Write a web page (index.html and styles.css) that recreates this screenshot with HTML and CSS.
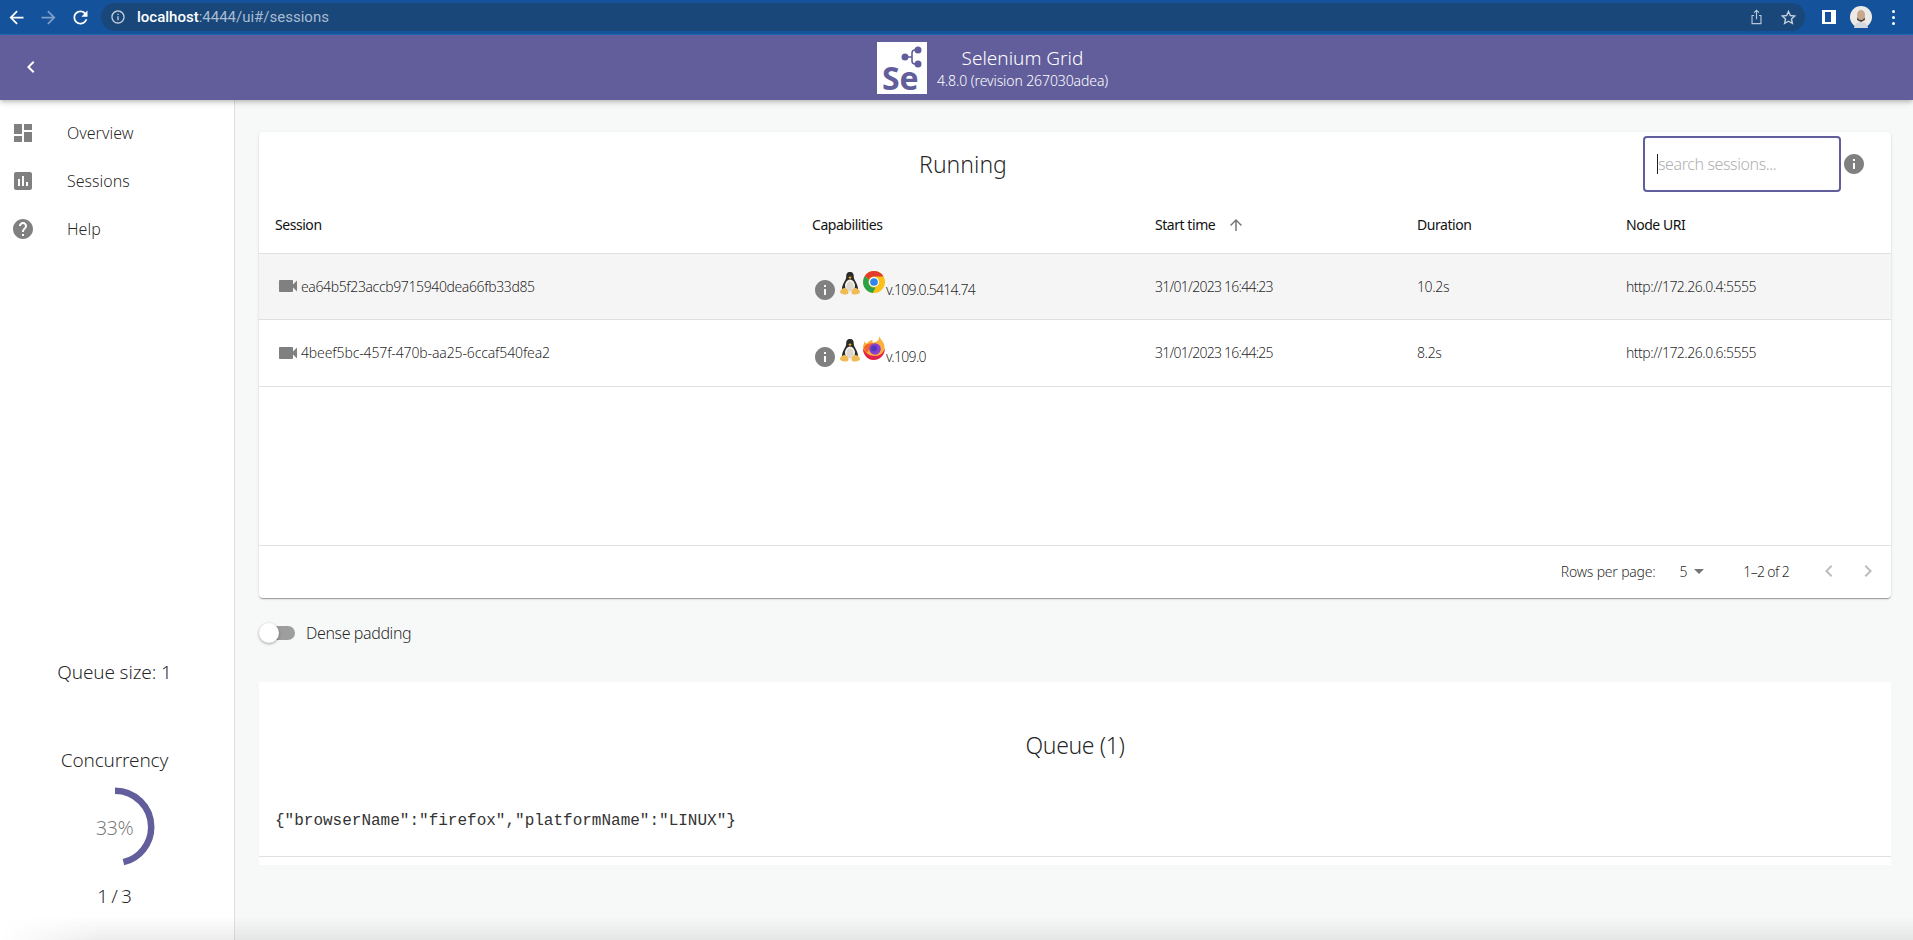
FILE: index.html
```html
<!DOCTYPE html>
<html lang="en">
<head>
    <meta charset="UTF-8">
    <meta name="viewport" content="width=device-width, initial-scale=1.0">
    <title>Selenium Grid</title>
    <link rel="stylesheet" href="styles.css">
</head>
<body>

    <!-- Browser toolbar -->
    <div class="browser-bar">
        <svg class="bar-icon" viewBox="0 0 24 24"><path d="M20 11H7.83l5.59-5.59L12 4l-8 8 8 8 1.41-1.41L7.83 13H20v-2z"/></svg>
        <svg class="bar-icon dim" viewBox="0 0 24 24"><path d="M12 4l-1.41 1.41L16.17 11H4v2h12.17l-5.58 5.59L12 20l8-8z"/></svg>
        <svg class="bar-icon" viewBox="0 0 24 24"><path d="M17.65 6.35C16.2 4.9 14.21 4 12 4c-4.42 0-7.99 3.58-7.99 8s3.57 8 7.99 8c3.73 0 6.84-2.55 7.73-6h-2.08c-.82 2.33-3.04 4-5.65 4-3.31 0-6-2.69-6-6s2.69-6 6-6c1.66 0 3.14.69 4.22 1.78L13 11h7V4l-2.35 2.35z"/></svg>
        <div class="omnibox">
            <svg class="omni-info" viewBox="0 0 24 24"><path d="M11 7h2v2h-2zm0 4h2v6h-2zm1-9C6.48 2 2 6.48 2 12s4.48 10 10 10 10-4.48 10-10S17.52 2 12 2zm0 18c-4.41 0-8-3.59-8-8s3.59-8 8-8 8 3.59 8 8-3.59 8-8 8z"/></svg>
            <span class="url"><b>localhost</b>:4444/ui#/sessions</span>
            <svg class="omni-share" viewBox="0 0 16 20"><path d="M8 1v11M5 4l3-3 3 3M5 7.500H2.500v10h11v-10H11" fill="none" stroke="#b9c6d6" stroke-width="1.400"/></svg>
            <svg class="omni-star" viewBox="0 0 24 24"><path d="M12 3.500l2.600 5.700 6.200.7-4.600 4.200 1.300 6.100L12 17.200l-5.500 3 1.300-6.100-4.600-4.200 6.200-.7z" fill="none" stroke="#c3cfdc" stroke-width="2"/></svg>
        </div>
        <div class="side-panel"></div>
        <svg class="avatar" viewBox="0 0 22 22">
            <circle cx="11" cy="11" r="11" fill="#eceae6"/>
            <ellipse cx="11" cy="9" rx="4" ry="5" fill="#c9a78d"/>
            <path d="M7.500 11c1 4 6 4 7 0l.5 3-4 2-4-2z" fill="#4a3d35"/>
            <path d="M4 22c1-5 4-6 7-6s6 1 7 6z" fill="#d5d9de"/>
        </svg>
        <div class="dots"><i></i><i></i><i></i></div>
    </div>

    <header class="app-bar">
        <svg class="back" viewBox="0 0 24 24"><path d="M15.410 7.410L14 6l-6 6 6 6 1.410-1.410L10.830 12z"/></svg>
        <div class="logo">
            <svg class="logo-nodes" viewBox="0 0 50 52">
                <path d="M28 15h7M41 8h-3c-2 0-3 1-3 3v8c0 2 1 3 3 3h3" fill="none" stroke="#615e9b" stroke-width="1.600"/>
                <circle cx="28" cy="15" r="3.500" fill="#615e9b"/>
                <circle cx="41" cy="8" r="3.500" fill="#615e9b"/>
                <circle cx="41" cy="22" r="3.500" fill="#615e9b"/>
            </svg>
            <span class="logo-text">Se</span>
        </div>
        <div class="app-title">
            <h1>Selenium Grid</h1>
            <p>4.8.0 (revision 267030adea)</p>
        </div>
    </header>

    <div class="layout">
        <aside class="sidebar">
            <nav class="nav">
                <a class="nav-item">
                    <svg viewBox="0 0 24 24"><path d="M3 13h8V3H3v10zm0 8h8v-6H3v6zm10 0h8V11h-8v10zm0-18v6h8V3h-8z"/></svg>
                    Overview
                </a>
                <a class="nav-item">
                    <svg viewBox="0 0 24 24"><path d="M19 3H5c-1.100 0-2 .9-2 2v14c0 1.100.9 2 2 2h14c1.100 0 2-.9 2-2V5c0-1.100-.9-2-2-2zM9 17H7v-7h2v7zm4 0h-2V7h2v10zm4 0h-2v-4h2v4z"/></svg>
                    Sessions
                </a>
                <a class="nav-item">
                    <svg viewBox="0 0 24 24"><path d="M12 2C6.480 2 2 6.480 2 12s4.480 10 10 10 10-4.480 10-10S17.520 2 12 2zm1 17h-2v-2h2v2zm2.070-7.750l-.9.920C13.450 12.900 13 13.500 13 15h-2v-.5c0-1.100.45-2.100 1.170-2.830l1.240-1.260c.37-.36.59-.86.59-1.410 0-1.100-.9-2-2-2s-2 .9-2 2H8c0-2.210 1.790-4 4-4s4 1.790 4 4c0 .88-.36 1.680-.93 2.250z"/></svg>
                    Help
                </a>
            </nav>
            <div class="stats">
                <div class="stat-line queue-size">Queue size: 1</div>
                <div class="stat-line">Concurrency</div>
                <div class="ring">
                    <svg viewBox="0 0 80 80"><circle cx="40" cy="40" r="36.200" fill="none" stroke="#615e9b" stroke-width="6.500" stroke-dasharray="105 300" transform="rotate(-90 40 40)"/></svg>
                    <span class="ring-label">33%</span>
                </div>
                <div class="stat-line ratio">1 / 3</div>
            </div>
        </aside>

        <main class="content">
            <section class="card running">
                <div class="toolbar">
                    <h2 class="running-title">Running</h2>
                    <div class="search-box"><span class="caret"></span><span class="placeholder">search sessions...</span></div>
                    <svg class="info-icon search-info" viewBox="0 0 24 24"><path d="M12 2C6.480 2 2 6.480 2 12s4.480 10 10 10 10-4.480 10-10S17.520 2 12 2zm1 15h-2v-6h2v6zm0-8h-2V7h2v2z"/></svg>
                </div>
                <table class="sessions">
                    <thead>
                        <tr>
                            <th class="col-session">Session</th>
                            <th class="col-caps">Capabilities</th>
                            <th class="col-start">Start time <svg class="sort" viewBox="0 0 24 24"><path d="M4 12l1.410 1.410L11 7.830V20h2V7.830l5.580 5.590L20 12l-8-8-8 8z"/></svg></th>
                            <th class="col-duration">Duration</th>
                            <th class="col-node">Node URI</th>
                        </tr>
                    </thead>
                    <tbody>
                        <tr class="selected">
                            <td><div class="session-id"><svg class="cam" viewBox="0 0 24 24"><path d="M17 10.500V7c0-.55-.45-1-1-1H4c-.55 0-1 .45-1 1v10c0 .55.45 1 1 1h12c.55 0 1-.45 1-1v-3.500l4 4v-11l-4 4z"/></svg>ea64b5f23accb9715940dea66fb33d85</div></td>
                            <td>
                                <div class="caps">
                                    <svg class="info-icon" viewBox="0 0 24 24"><path d="M12 2C6.480 2 2 6.480 2 12s4.480 10 10 10 10-4.480 10-10S17.520 2 12 2zm1 15h-2v-6h2v6zm0-8h-2V7h2v2z"/></svg>
                                    <svg class="tux" viewBox="0 0 20 24">
                                        <path d="M10 1C7 1 6.200 3 6.200 6c0 3-4.200 7-4.200 12h16c0-5-4.200-9-4.200-12 0-3-.8-5-3.800-5z" fill="#2b2b2b"/>
                                        <ellipse cx="10" cy="15" rx="5" ry="6.500" fill="#f4f1ea"/>
                                        <ellipse cx="10" cy="15.500" rx="3.500" ry="5" fill="#dcd8cf"/>
                                        <path d="M8.300 6.500L10 5.300l1.700 1.200L10 8z" fill="#e9a825"/>
                                        <path d="M0 21c0-2 3-4 5-4 2 0 3.500 3 3.500 5 0 1-2 1.500-4 1.500S0 22.500 0 21zM20 21c0-2-3-4-5-4-2 0-3.500 3-3.500 5 0 1 2 1.500 4 1.500s4.500-1 4.500-2.500z" fill="#f0bb55"/>
                                    </svg>
                                    <svg class="browser" viewBox="0 0 20 20">
                                        <circle cx="10" cy="10" r="10" fill="#fbc116"/>
                                        <path d="M10 0a10 10 0 0 1 8.660 5H10a5 5 0 0 0-4.600 3L1.600 4.600A10 10 0 0 1 10 0z" fill="#e33b2e"/>
                                        <path d="M1.600 4.600L5.400 8a5 5 0 0 0 6.100 6.800L8.800 19.900A10 10 0 0 1 1.600 4.600z" fill="#2aa24a"/>
                                        <circle cx="10" cy="10" r="4.600" fill="#fff"/>
                                        <circle cx="10" cy="10" r="3.500" fill="#2f86ea"/>
                                    </svg>
                                    <span class="version">v.109.0.5414.74</span>
                                </div>
                            </td>
                            <td class="start-cell">31/01/2023 16:44:23</td>
                            <td>10.2s</td>
                            <td class="node-cell">http://172.26.0.4:5555</td>
                        </tr>
                        <tr class="second">
                            <td><div class="session-id"><svg class="cam" viewBox="0 0 24 24"><path d="M17 10.500V7c0-.55-.45-1-1-1H4c-.55 0-1 .45-1 1v10c0 .55.45 1 1 1h12c.55 0 1-.45 1-1v-3.500l4 4v-11l-4 4z"/></svg>4beef5bc-457f-470b-aa25-6ccaf540fea2</div></td>
                            <td>
                                <div class="caps">
                                    <svg class="info-icon" viewBox="0 0 24 24"><path d="M12 2C6.480 2 2 6.480 2 12s4.480 10 10 10 10-4.480 10-10S17.520 2 12 2zm1 15h-2v-6h2v6zm0-8h-2V7h2v2z"/></svg>
                                    <svg class="tux" viewBox="0 0 20 24">
                                        <path d="M10 1C7 1 6.200 3 6.200 6c0 3-4.200 7-4.200 12h16c0-5-4.200-9-4.200-12 0-3-.8-5-3.800-5z" fill="#2b2b2b"/>
                                        <ellipse cx="10" cy="15" rx="5" ry="6.500" fill="#f4f1ea"/>
                                        <ellipse cx="10" cy="15.500" rx="3.500" ry="5" fill="#dcd8cf"/>
                                        <path d="M8.300 6.500L10 5.300l1.700 1.200L10 8z" fill="#e9a825"/>
                                        <path d="M0 21c0-2 3-4 5-4 2 0 3.500 3 3.500 5 0 1-2 1.500-4 1.500S0 22.500 0 21zM20 21c0-2-3-4-5-4-2 0-3.500 3-3.500 5 0 1 2 1.500 4 1.500s4.500-1 4.500-2.500z" fill="#f0bb55"/>
                                    </svg>
                                    <svg class="browser firefox" viewBox="0 0 24 24">
                                        <path d="M17 0c1 3 4 5 5 8 2 6-1 15-10.500 15.500C5 24 1 18 1 12.500c0-3 1-5.500 2-7.500 0 2 1 2.500 2 2.500 1-1.500 3-3.500 6-3.500-1 1-1 2 0 2.500 4 0 7-3 6-6.500z" fill="#fbb03b"/>
                                        <path d="M1 12.500C1 18 5 24 11.500 24 19 24 23 18 23 12c-1.500 5-5 8-10 8-6 0-10-3.500-12-7.500z" fill="#e3214f"/>
                                        <path d="M2 11c2-3 7-5 11-3l-5 4-3 5c-2-1-3-3-3-6z" fill="#f2662c"/>
                                        <circle cx="13" cy="13" r="5.800" fill="#8a3fd0"/>
                                        <circle cx="12" cy="12.500" r="3" fill="#4f3ab8"/>
                                    </svg>
                                    <span class="version">v.109.0</span>
                                </div>
                            </td>
                            <td class="start-cell">31/01/2023 16:44:25</td>
                            <td>8.2s</td>
                            <td class="node-cell">http://172.26.0.6:5555</td>
                        </tr>
                        <tr class="empty"><td colspan="5"></td></tr>
                    </tbody>
                </table>
                <div class="pagination">
                    <span>Rows per page:</span>
                    <span class="page-size">5<svg viewBox="0 0 24 24"><path d="M7 10l5 5 5-5z"/></svg></span>
                    <span class="page-range">1–2 of 2</span>
                    <svg class="page-btn" viewBox="0 0 24 24"><path d="M15.410 7.410L14 6l-6 6 6 6 1.410-1.410L10.830 12z"/></svg>
                    <svg class="page-btn" viewBox="0 0 24 24"><path d="M10 6L8.590 7.410 13.170 12l-4.580 4.590L10 18l6-6z"/></svg>
                </div>
            </section>

            <label class="dense">
                <span class="switch"><span class="track"></span><span class="thumb"></span></span>
                Dense padding
            </label>

            <section class="card queue">
                <h2>Queue (1)</h2>
                <pre class="queue-item">{"browserName":"firefox","platformName":"LINUX"}</pre>
            </section>
        </main>
    </div>

    <div class="bottom-shade"></div>

</body>
</html>
```

FILE: styles.css
```css
* {
    box-sizing: border-box;
}

html, body {
    height: 100%;
}

body {
    margin: 0;
    display: flex;
    flex-direction: column;
    overflow: hidden;
    background-color: #f7f8f8;
    color: rgba(0, 0, 0, 0.87);
    font-family: "Noto Sans", "Open Sans", sans-serif;
    font-weight: 300;
    font-size: 14px;
}

/* browser toolbar */
.browser-bar {
    height: 35px;
    flex: none;
    display: flex;
    align-items: center;
    padding-left: 6px;
    background-color: #14539c;
    border-bottom: 1px solid #2268b4;
    color: #fff;
}

.bar-icon {
    width: 21px;
    height: 21px;
    fill: #fff;
    margin-right: 11px;
}

.bar-icon:nth-child(3) {
    margin-right: 10px;
}

.bar-icon.dim {
    fill: #7e9fc8;
}

.omnibox {
    width: 1704px;
    height: 28px;
    display: flex;
    align-items: center;
    padding: 0 8px 0 9px;
    border-radius: 14px;
    background-color: #19477a;
}

.omni-info {
    width: 16px;
    height: 16px;
    fill: #c3cfdc;
}

.url {
    margin-left: 11px;
    flex: 1;
    font-family: "Roboto", sans-serif;
    font-weight: 400;
    font-size: 15px;
    color: #a9bcd2;
}

.url b {
    font-weight: 500;
    color: #fff;
}

.omni-share {
    width: 13px;
    height: 17px;
    margin-right: 17px;
}

.omni-star {
    width: 17px;
    height: 17px;
}

.side-panel {
    width: 14px;
    height: 14px;
    margin-left: 17px;
    background-color: #14539c;
    border: solid #fff;
    border-width: 2px 5px 2px 3px;
}

.avatar {
    width: 22px;
    height: 22px;
    margin-left: 14px;
}

.dots {
    margin-left: 20px;
    display: flex;
    flex-direction: column;
    gap: 3px;
}

.dots i {
    width: 3px;
    height: 3px;
    border-radius: 50%;
    background-color: #fff;
}

/* app bar */
.app-bar {
    height: 65px;
    flex: none;
    display: flex;
    align-items: center;
    justify-content: center;
    position: relative;
    z-index: 2;
    background-color: #615e9b;
    color: #fff;
    box-shadow: 0 2px 4px -1px rgba(0, 0, 0, 0.2), 0 4px 5px 0 rgba(0, 0, 0, 0.1);
}

.back {
    position: absolute;
    left: 19px;
    top: 20px;
    width: 24px;
    height: 24px;
    fill: #fff;
}

.logo {
    width: 50px;
    height: 52px;
    position: relative;
    background-color: #fff;
    margin-right: 10px;
    margin-left: 72px;
}

.logo-nodes {
    position: absolute;
    left: 0;
    top: 0;
    width: 50px;
    height: 52px;
}

.logo-text {
    position: absolute;
    left: 5px;
    top: 16px;
    font-weight: 700;
    font-size: 32px;
    line-height: 40px;
    color: #615e9b;
}

.app-title {
    text-align: center;
    margin-top: -2px;
}

.app-title h1 {
    margin: 0;
    font-weight: 300;
    font-size: 19px;
    line-height: 28px;
}

.app-title p {
    margin: 0;
    font-size: 14px;
    line-height: 18px;
    letter-spacing: -0.1px;
}

/* main layout */
.layout {
    flex: 1;
    display: flex;
    min-height: 0;
}

.sidebar {
    width: 235px;
    flex: none;
    display: flex;
    flex-direction: column;
    justify-content: space-between;
    background-color: #fff;
    border-right: 1px solid #e0e0e0;
}

.nav {
    padding-top: 9px;
}

.nav-item {
    height: 48px;
    display: flex;
    align-items: center;
    padding-left: 11px;
    font-size: 16px;
    color: rgba(0, 0, 0, 0.87);
}

.nav-item svg {
    width: 24px;
    height: 24px;
    margin-right: 32px;
    fill: #808080;
}

.stats {
    display: flex;
    flex-direction: column;
    align-items: center;
    padding: 0 5px 31px 0;
    font-size: 19px;
    letter-spacing: -0.15px;
}

.stat-line {
    line-height: 26px;
}

.queue-size {
    margin-bottom: 62px;
}

.ratio {
    word-spacing: -1.5px;
}

.ring {
    width: 80px;
    height: 80px;
    margin: 14px 0 16px;
    position: relative;
    display: flex;
    align-items: center;
    justify-content: center;
}

.ring svg {
    position: absolute;
    left: 0;
    top: 0;
    width: 80px;
    height: 80px;
}

.ring-label {
    font-size: 20px;
    letter-spacing: -0.5px;
    color: rgba(0, 0, 0, 0.54);
}

.content {
    flex: 1;
    padding: 32px 22px 0 24px;
    min-width: 0;
}

.card {
    background-color: #fff;
}

.running {
    height: 466px;
    border-radius: 4px;
    box-shadow: 0 2px 1px -1px rgba(0, 0, 0, 0.2), 0 1px 1px 0 rgba(0, 0, 0, 0.14), 0 1px 3px 0 rgba(0, 0, 0, 0.12);
}

.toolbar {
    height: 66px;
    position: relative;
    display: flex;
    justify-content: center;
    align-items: center;
}

.running-title {
    margin: -2px 0 0 -224px;
    font-weight: 300;
    font-size: 23px;
    line-height: 66px;
}

.search-box {
    position: absolute;
    right: 50px;
    top: 4px;
    width: 198px;
    height: 56px;
    display: flex;
    align-items: center;
    padding-left: 12px;
    border: 2px solid #615e9b;
    border-radius: 4px;
    font-size: 16px;
    letter-spacing: -0.4px;
}

.caret {
    width: 1px;
    height: 20px;
    background-color: #222;
}

.placeholder {
    color: #b0b0b0;
}

.info-icon {
    width: 24px;
    height: 24px;
    fill: #808080;
}

.search-info {
    position: absolute;
    right: 25px;
    top: 20px;
}

.sessions {
    width: 100%;
    border-collapse: collapse;
    table-layout: fixed;
}

.sessions th,
.sessions td {
    padding: 0 16px;
    text-align: left;
    border-bottom: 1px solid #e0e0e0;
    font-size: 14px;
    letter-spacing: -0.38px;
}

.sessions th {
    height: 55px;
    padding-bottom: 2px;
    font-weight: 400;
    letter-spacing: -0.45px;
    color: #111;
}

.sessions td {
    height: 66px;
    color: rgba(0, 0, 0, 0.87);
}

.selected td {
    background-color: #f5f5f5;
}

.second td {
    height: 67px;
}

.second .session-id {
    letter-spacing: -0.13px;
}

.sessions .empty td {
    height: 159px;
}

.sessions .start-cell {
    letter-spacing: -0.75px;
}

.sessions .node-cell {
    letter-spacing: -0.5px;
}

.col-session { width: 537px; }
.col-caps { width: 343px; }
.col-start { width: 262px; }
.col-duration { width: 209px; }
.col-node { width: 281px; }

.sort {
    width: 18px;
    height: 18px;
    margin-left: 9px;
    vertical-align: -4px;
    fill: #757575;
}

.session-id {
    display: flex;
    align-items: center;
    padding-left: 1px;
}

.cam {
    width: 24px;
    height: 24px;
    margin-right: 1px;
    fill: #808080;
}

.caps {
    display: flex;
    align-items: flex-start;
    height: 34px;
    padding-left: 1px;
}

.caps .info-icon {
    margin-top: 9px;
}

.tux {
    width: 20px;
    height: 24px;
    margin: 2px 3px 0 3px;
}

.browser {
    width: 22px;
    height: 22px;
    margin-top: 2px;
}

.firefox {
    width: 24px;
    height: 24px;
    margin: 0 -1px 0 -1px;
}

.version {
    margin-top: 11px;
    margin-left: 1px;
    letter-spacing: -0.7px;
}

.pagination {
    height: 51px;
    display: flex;
    align-items: center;
    justify-content: flex-end;
    padding-right: 11px;
    font-size: 14px;
    letter-spacing: -0.2px;
}

.page-size {
    display: flex;
    align-items: center;
    margin-left: 24px;
    margin-right: 32px;
}

.page-size svg {
    width: 24px;
    height: 24px;
    fill: #757575;
}

.page-range {
    margin-right: 13px;
    letter-spacing: -0.65px;
}

.page-btn {
    width: 24px;
    height: 24px;
    margin-left: 15px;
    fill: #bdbdbd;
}

/* dense padding switch */
.dense {
    height: 52px;
    margin-top: 9px;
    display: flex;
    align-items: center;
    font-size: 16px;
    letter-spacing: -0.4px;
}

.switch {
    width: 37px;
    height: 20px;
    margin-right: 10px;
    position: relative;
}

.track {
    position: absolute;
    left: 1px;
    top: 3px;
    width: 35px;
    height: 14px;
    border-radius: 7px;
    background-color: #9e9e9e;
}

.thumb {
    position: absolute;
    left: 0;
    top: 0;
    width: 20px;
    height: 20px;
    border-radius: 50%;
    background-color: #fff;
    box-shadow: 0 1px 3px rgba(0, 0, 0, 0.35);
}

.queue {
    height: 183px;
    margin-top: 23px;
    padding-top: 43px;
}

.queue h2 {
    margin: 0;
    text-align: center;
    font-weight: 300;
    font-size: 23px;
    letter-spacing: -0.4px;
    line-height: 40px;
}

.queue-item {
    margin: 46px 0 0 0;
    padding: 0 16px 25px 16px;
    border-bottom: 1px solid #e0e0e0;
    font-family: "Liberation Mono", monospace;
    font-size: 16px;
    line-height: 20px;
    color: #333;
}

.bottom-shade {
    position: fixed;
    left: 0;
    right: 0;
    bottom: 0;
    height: 24px;
    background: linear-gradient(rgba(0, 0, 0, 0), rgba(0, 0, 0, 0.07));
    -webkit-mask-image: linear-gradient(90deg, transparent, #000 100px);
    mask-image: linear-gradient(90deg, transparent, #000 100px);
}
```
